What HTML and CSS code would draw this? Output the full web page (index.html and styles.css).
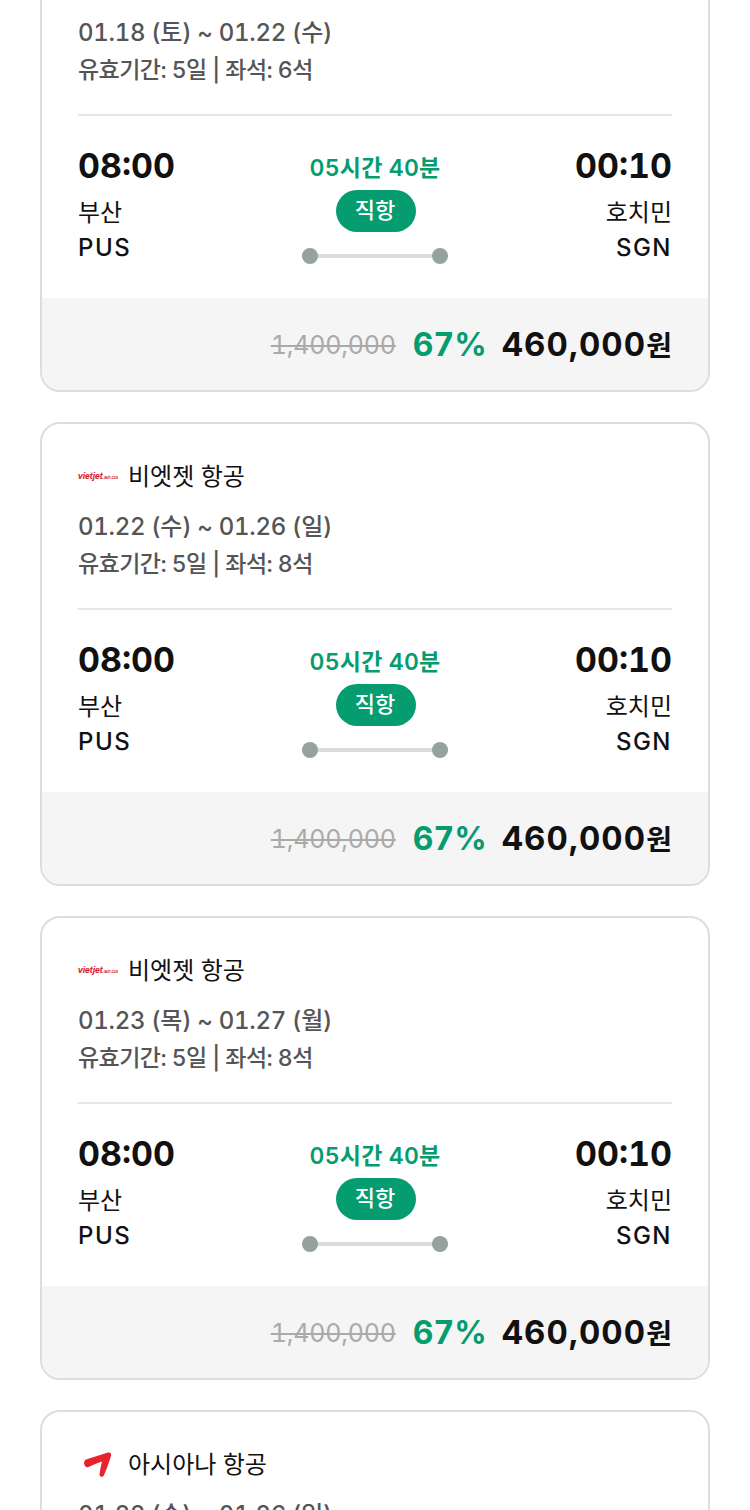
FILE: index.html
```html
<!DOCTYPE html>
<html lang="ko">
<head>
<meta charset="utf-8">
<title>항공권</title>
<link rel="stylesheet" href="styles.css">
</head>
<body>
<main class="list">
  <article class="card">
    <div class="body">
      <div class="airline"><svg class="logo" viewBox="0 0 40 30"><text x="0" y="18" class="vj">vietjet<tspan class="vj-sm">.air.com</tspan></text></svg><span>비엣젯 항공</span></div>
      <p class="date">01.18 (토) ~ 01.22 (수)</p>
      <p class="info">유효기간: 5일 | 좌석: 6석</p>
      <div class="route">
        <div class="end"><b class="time">08:00</b><span class="city">부산</span><span class="code">PUS</span></div>
        <div class="mid"><span class="dur">05시간 40분</span><span class="pill">직항</span><span class="line"></span></div>
        <div class="end right"><b class="time">00:10</b><span class="city">호치민</span><span class="code">SGN</span></div>
      </div>
    </div>
    <div class="price"><s>1,400,000</s><em>67%</em><strong>460,000<small>원</small></strong></div>
  </article>
  <article class="card">
    <div class="body">
      <div class="airline"><svg class="logo" viewBox="0 0 40 30"><text x="0" y="18" class="vj">vietjet<tspan class="vj-sm">.air.com</tspan></text></svg><span>비엣젯 항공</span></div>
      <p class="date">01.22 (수) ~ 01.26 (일)</p>
      <p class="info">유효기간: 5일 | 좌석: 8석</p>
      <div class="route">
        <div class="end"><b class="time">08:00</b><span class="city">부산</span><span class="code">PUS</span></div>
        <div class="mid"><span class="dur">05시간 40분</span><span class="pill">직항</span><span class="line"></span></div>
        <div class="end right"><b class="time">00:10</b><span class="city">호치민</span><span class="code">SGN</span></div>
      </div>
    </div>
    <div class="price"><s>1,400,000</s><em>67%</em><strong>460,000<small>원</small></strong></div>
  </article>
  <article class="card">
    <div class="body">
      <div class="airline"><svg class="logo" viewBox="0 0 40 30"><text x="0" y="18" class="vj">vietjet<tspan class="vj-sm">.air.com</tspan></text></svg><span>비엣젯 항공</span></div>
      <p class="date">01.23 (목) ~ 01.27 (월)</p>
      <p class="info">유효기간: 5일 | 좌석: 8석</p>
      <div class="route">
        <div class="end"><b class="time">08:00</b><span class="city">부산</span><span class="code">PUS</span></div>
        <div class="mid"><span class="dur">05시간 40분</span><span class="pill">직항</span><span class="line"></span></div>
        <div class="end right"><b class="time">00:10</b><span class="city">호치민</span><span class="code">SGN</span></div>
      </div>
    </div>
    <div class="price"><s>1,400,000</s><em>67%</em><strong>460,000<small>원</small></strong></div>
  </article>
  <article class="card">
    <div class="body">
      <div class="airline"><svg class="logo" viewBox="0 0 40 30"><path d="M8 10.500 L30 3.600 C32.500 3 33.800 4.800 33 7 C31 13.500 28.500 20.500 25.800 26.500 C24.800 28.500 21.300 28 21.500 25.500 C22 21 23 16.500 24 12.500 C19.500 14 15 16 10.500 18 C6.500 19.500 4.200 12.500 8 10.500Z" fill="#e8232e"/></svg><span>아시아나 항공</span></div>
      <p class="date">01.22 (수) ~ 01.26 (일)</p>
      <p class="info">유효기간: 5일 | 좌석: 8석</p>
    </div>
  </article>
</main>
</body>
</html>
```
FILE: styles.css
```css
* { box-sizing: border-box; }
html, body { margin: 0; padding: 0; background: #fff; }
body {
  height: 1510px;
  overflow: hidden;
  font-family: Inter, "Noto Sans CJK KR", sans-serif;
  font-variant-numeric: tabular-nums;
  color: #111;
}
.list {
  display: flex;
  flex-direction: column;
  gap: 30px;
  margin: -72px 40px 0;
}
.card {
  height: 464px;
  flex: none;
  border: 2px solid #ddd;
  border-radius: 20px;
  overflow: hidden;
  background: #fff;
  display: flex;
  flex-direction: column;
}
.body { flex: 1; padding: 34px 36px 0; }
.airline {
  display: flex;
  align-items: center;
  gap: 10px;
  height: 36px;
  font-size: 24px;
  line-height: 36px;
}
.airline span { padding-top: 2px; }
.logo { width: 40px; height: 30px; flex: none; }
.vj { font: italic 700 8.500px "Liberation Sans", sans-serif; fill: #d8232f; stroke: #d8232f; stroke-width: 0.15; }
.vj-sm { font-size: 5.500px; font-weight: 400; }
.date, .info { margin: 0; color: #555; font-weight: 500; }
.date { font-size: 24px; line-height: 36px; margin-top: 15px; letter-spacing: -0.3px; }
.info { font-size: 23px; line-height: 36px; margin-top: 1px; letter-spacing: -0.55px; }
.route {
  display: flex;
  justify-content: space-between;
  margin-top: 26px;
  padding-top: 28px;
  border-top: 2px solid #e6e6e6;
}
.end { display: flex; flex-direction: column; width: 130px; }
.right { align-items: flex-end; }
.time { font-size: 34px; font-weight: 700; line-height: 44px; }
.city { font-size: 24px; line-height: 36px; margin-top: 7px; }
.code { font-size: 24px; font-weight: 500; line-height: 34px; letter-spacing: 1.5px; }
.mid { display: flex; flex-direction: column; align-items: center; width: 146px; margin-top: 1px; }
.dur { color: #059c70; font-size: 23px; font-weight: 600; line-height: 32px; margin-top: 7px; letter-spacing: 0.2px; }
.pill {
  width: 80px;
  height: 42px;
  margin: 6px 0 0 2px;
  padding-right: 2px;
  border-radius: 21px;
  background: #059c70;
  color: #fff;
  font-size: 22px;
  font-weight: 500;
  line-height: 40px;
  text-align: center;
}
.line {
  position: relative;
  width: 146px;
  height: 16px;
  margin-top: 16px;
  background: linear-gradient(#d9dcdb, #d9dcdb) center / 100% 4px no-repeat;
}
.line::before, .line::after {
  content: "";
  position: absolute;
  top: 0;
  width: 16px;
  height: 16px;
  border-radius: 50%;
  background: #94a39f;
}
.line::before { left: 0; }
.line::after { right: 0; }
.price {
  height: 92px;
  flex: none;
  background: #f5f5f5;
  display: flex;
  align-items: center;
  justify-content: flex-end;
  padding-right: 36px;
}
.price s { color: #aaa; font-size: 25px; font-weight: 400; letter-spacing: -0.2px; padding-top: 2px; }
.price em { color: #059c70; font-style: normal; font-weight: 700; font-size: 32px; margin-left: 17px; }
.price strong { font-size: 33px; font-weight: 700; margin-left: 15px; letter-spacing: 1.1px; }
.price small { font-size: 28px; font-weight: 600; letter-spacing: 0; }
```
